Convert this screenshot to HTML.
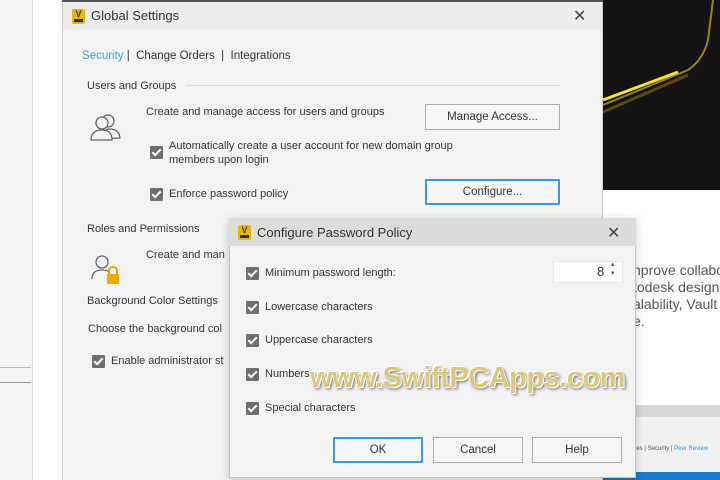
<!DOCTYPE html>
<html><head><meta charset="utf-8"><style>
*{margin:0;padding:0;box-sizing:border-box}
body{width:720px;height:480px;overflow:hidden;position:relative;background:#fff;font-family:"Liberation Sans","DejaVu Sans",sans-serif;font-size:11px;color:#333}
.abs{position:absolute}
.cb{position:absolute;width:13px;height:13px;background:#6f6f6f;border-radius:1px}
.cb:after{content:"";position:absolute;left:4px;top:1px;width:3px;height:7px;border:solid #fff;border-width:0 2px 2px 0;transform:rotate(45deg)}
.btn{position:absolute;background:#f6f6f6;border:1px solid #adadad;text-align:center;font-size:11.5px;color:#333}
.t{position:absolute;white-space:nowrap}
.vicon{position:absolute;width:13px;height:15px;background:#e8b800;border-radius:2px;color:#333;font-size:9px;font-weight:bold;text-align:center;line-height:10px}
.vicon:after{content:"";position:absolute;left:2px;right:2px;bottom:2px;height:3px;background:#333}
.x{position:absolute;font-size:16px;color:#444;font-weight:300}
</style></head><body>
<div class="abs" style="left:0;top:0;width:33px;height:480px;background:#f4f4f4"></div>
<div class="abs" style="left:32px;top:0;width:1px;height:480px;background:#ddd"></div>
<div class="abs" style="left:0;top:367px;width:31px;height:1px;background:#bbb"></div>
<div class="abs" style="left:0;top:382px;width:31px;height:1px;background:#999"></div>
<!-- right bg -->
<div class="abs" style="left:603px;top:0;width:117px;height:190px;background:#141212"></div>
<svg class="abs" style="left:603px;top:0" width="117" height="190"><path d="M0 105 L85 70 Q100 60 105 40 L110 0" stroke="#b8a020" stroke-width="2" fill="none" opacity=".8"/><path d="M0 100 L75 72" stroke="#f0e040" stroke-width="3" fill="none"/><path d="M0 112 L85 75" stroke="#5a4a10" stroke-width="3" fill="none"/></svg>
<div class="t" style="left:633px;top:262px;font-size:14px;color:#555;line-height:17px">nprove collabo<br>todesk design<br>alability, Vault<br>e.</div>
<div class="abs" style="left:603px;top:405px;width:117px;height:12px;background:#d8d8d8"></div>
<div class="abs" style="left:603px;top:417px;width:117px;height:63px;background:#f0f0f0"></div>
<div class="t" style="left:633px;top:446px;font-size:6px;color:#555">pes | Security | <span style="color:#39c">Peer Review</span></div>
<div class="abs" style="left:603px;top:472px;width:117px;height:8px;background:#1a7acc"></div>
<!-- global settings -->
<div class="abs" style="left:62px;top:0;width:541px;height:480px;background:#f3f3f3;border-left:1px solid #ccc;border-right:1px solid #ccc"></div>
<div class="abs" style="left:62px;top:0;width:541px;height:2px;background:#555"></div>
<div class="abs" style="left:63px;top:2px;width:539px;height:28px;background:#ececec"></div>
<div class="vicon" style="left:72px;top:9px">V</div>
<div class="t" style="left:91px;top:8px;font-size:13px;color:#333">Global Settings</div>
<div class="x" style="left:573px;top:6px">✕</div>
<div class="t" style="left:82px;top:50px;font-size:11.5px"><span style="color:#3aa0d0">Security</span> | &nbsp;Change Orders &nbsp;| &nbsp;Integrations</div>
<div class="t" style="left:87px;top:80px">Users and Groups</div>
<div class="abs" style="left:186px;top:85px;width:374px;height:1px;background:#ddd"></div>
<svg class="abs" style="left:90px;top:112px" width="32" height="30"><g fill="none" stroke="#666" stroke-width="1.3"><circle cx="18" cy="9" r="6"/><path d="M12 27 Q12 17 20 17 Q29 17 30 26 Z"/><circle cx="12" cy="11" r="6" fill="#f3f3f3"/><path d="M1 28 Q1 18 12 18 Q22 18 22 28 Z" fill="#f3f3f3"/></g></svg>
<div class="t" style="left:146px;top:106px">Create and manage access for users and groups</div>
<div class="btn" style="left:425px;top:104px;width:135px;height:26px;line-height:24px">Manage Access...</div>
<div class="cb" style="left:150px;top:146px"></div>
<div class="t" style="left:169px;top:139px;line-height:14px">Automatically create a user account for new domain group<br>members upon login</div>
<div class="cb" style="left:150px;top:188px"></div>
<div class="t" style="left:169px;top:188px">Enforce password policy</div>
<div class="btn" style="left:425px;top:179px;width:135px;height:26px;line-height:22px;border:2px solid #3a9ad9">Configure...</div>
<div class="t" style="left:87px;top:223px">Roles and Permissions</div>
<svg class="abs" style="left:90px;top:252px" width="32" height="32"><g fill="none" stroke="#666" stroke-width="1.3"><circle cx="12" cy="10" r="6"/><path d="M2 27 Q2 18 12 18 Q18 18 20 21"/></g><path d="M19 22 v-3 a4 4 0 0 1 8 0 v3" stroke="#e8a000" stroke-width="2" fill="none"/><rect x="17" y="22" width="12" height="10" fill="#f0a800"/></svg>
<div class="t" style="left:146px;top:249px">Create and man</div>
<div class="t" style="left:87px;top:295px">Background Color Settings</div>
<div class="t" style="left:88px;top:323px">Choose the background col</div>
<div class="cb" style="left:92px;top:355px"></div>
<div class="t" style="left:111px;top:355px">Enable administrator st</div>
<!-- configure dialog -->
<div class="abs" style="left:229px;top:218px;width:407px;height:260px;background:#f3f3f3;border:1px solid #c4c4c4;box-shadow:0 2px 8px rgba(0,0,0,.2)"></div>
<div class="abs" style="left:229px;top:218px;width:407px;height:28px;background:#dcdcdc"></div>
<div class="vicon" style="left:238px;top:225px">V</div>
<div class="t" style="left:257px;top:225px;font-size:13px">Configure Password Policy</div>
<div class="x" style="left:607px;top:223px">✕</div>
<div class="cb" style="left:246px;top:267px"></div>
<div class="t" style="left:265px;top:267px">Minimum password length:</div>
<div class="abs" style="left:553px;top:261px;width:70px;height:22px;background:#fff;border:1px solid #e8e8e8"></div>
<div class="t" style="left:597px;top:264px;font-size:13px">8</div>
<div class="t" style="left:611px;top:260px;font-size:7px;line-height:9px;color:#555">▴<br>▾</div>
<div class="cb" style="left:246px;top:301px"></div>
<div class="t" style="left:265px;top:301px">Lowercase characters</div>
<div class="cb" style="left:246px;top:334px"></div>
<div class="t" style="left:265px;top:334px">Uppercase characters</div>
<div class="cb" style="left:246px;top:368px"></div>
<div class="t" style="left:265px;top:368px">Numbers</div>
<div class="cb" style="left:246px;top:402px"></div>
<div class="t" style="left:265px;top:402px">Special characters</div>
<div class="btn" style="left:333px;top:437px;width:90px;height:26px;line-height:22px;border:2px solid #3a9ad9">OK</div>
<div class="btn" style="left:433px;top:437px;width:90px;height:26px;line-height:24px">Cancel</div>
<div class="btn" style="left:532px;top:437px;width:90px;height:26px;line-height:24px">Help</div>
<!-- watermark -->
<div class="t" style="left:310px;top:362px;font-size:29px;font-weight:bold;color:#d8c880;text-shadow:1px 1px 0 #fff,-1px -1px 0 #fff,2px 2px 3px #666;letter-spacing:-0.5px">www.SwiftPCApps.com</div>
</body></html>
